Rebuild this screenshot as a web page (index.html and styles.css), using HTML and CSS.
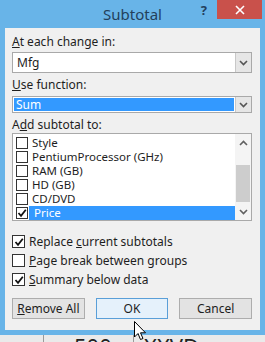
FILE: index.html
```html
<!DOCTYPE html>
<html lang="en">
<head>
    <meta charset="UTF-8">
    <title>Subtotal</title>
    <link rel="stylesheet" href="styles.css">
</head>
<body>
    <div class="window">
        <div class="titlebar">
            <span></span>
            <span class="title">Subtotal</span>
            <div class="title-buttons">
                <span class="help">?</span>
                <span class="close">
                    <svg width="10" height="10" viewBox="0 0 10 10"><path d="M1 1 L9 9 M9 1 L1 9" stroke="#fff" stroke-width="1.6"/></svg>
                </span>
            </div>
        </div>
        <div class="dialog">
            <div class="field-label label-first"><u>A</u>t each change in:</div>
            <div class="combo combo-tall">
                <span class="combo-value">Mfg</span>
                <span class="combo-arrow"><svg width="9" height="6" viewBox="0 0 9 6"><path d="M1 1 L4.5 4.5 L8 1" fill="none" stroke="#555" stroke-width="1.6"/></svg></span>
            </div>

            <div class="field-label"><u>U</u>se function:</div>
            <div class="combo combo-short">
                <span class="combo-value selected">Sum</span>
                <span class="combo-arrow"><svg width="9" height="6" viewBox="0 0 9 6"><path d="M1 1 L4.5 4.5 L8 1" fill="none" stroke="#555" stroke-width="1.6"/></svg></span>
            </div>

            <div class="field-label">A<u>d</u>d subtotal to:</div>
            <div class="list">
                <div class="list-items">
                    <div class="list-row"><span class="check"></span><span class="item-text">Style</span></div>
                    <div class="list-row"><span class="check"></span><span class="item-text">PentiumProcessor (GHz)</span></div>
                    <div class="list-row"><span class="check"></span><span class="item-text">RAM (GB)</span></div>
                    <div class="list-row"><span class="check"></span><span class="item-text">HD (GB)</span></div>
                    <div class="list-row"><span class="check"></span><span class="item-text">CD/DVD</span></div>
                    <div class="list-row"><span class="check checked"><svg width="10" height="10" viewBox="0 0 10 10"><path d="M1.5 5 L4 7.8 L8.8 1.8" fill="none" stroke="#111" stroke-width="1.8"/></svg></span><span class="item-text active">Price</span></div>
                </div>
                <div class="scrollbar">
                    <span class="scroll-btn"><svg width="9" height="6" viewBox="0 0 9 6"><path d="M1 5 L4.5 1.5 L8 5" fill="none" stroke="#606060" stroke-width="1.6"/></svg></span>
                    <div class="scroll-track"><div class="scroll-thumb"></div></div>
                    <span class="scroll-btn"><svg width="9" height="6" viewBox="0 0 9 6"><path d="M1 1 L4.5 4.5 L8 1" fill="none" stroke="#606060" stroke-width="1.6"/></svg></span>
                </div>
            </div>

            <div class="options">
                <div class="option"><span class="check checked"><svg width="10" height="10" viewBox="0 0 10 10"><path d="M1.5 5 L4 7.8 L8.8 1.8" fill="none" stroke="#111" stroke-width="1.8"/></svg></span><span>Replace <u>c</u>urrent subtotals</span></div>
                <div class="option"><span class="check"></span><span><u>P</u>age break between groups</span></div>
                <div class="option"><span class="check checked"><svg width="10" height="10" viewBox="0 0 10 10"><path d="M1.5 5 L4 7.8 L8.8 1.8" fill="none" stroke="#111" stroke-width="1.8"/></svg></span><span><u>S</u>ummary below data</span></div>
            </div>

            <div class="buttons">
                <button class="btn"><u>R</u>emove All</button>
                <button class="btn btn-default">OK</button>
                <button class="btn">Cancel</button>
            </div>
        </div>
    </div>
    <div class="sheet">
        <div class="cell cell-a"></div>
        <div class="cell cell-b">500</div>
        <div class="cell cell-c">XXVD</div>
    </div>

    <!-- mouse pointer over the OK button -->
    <svg class="cursor" width="13" height="20" viewBox="0 0 13 20">
        <path d="M0.5 0.5 L0.5 16 L4 12.5 L6.5 18.5 L9 17.5 L6.5 11.8 L11.5 11.8 Z" fill="#fff" stroke="#000" stroke-width="1"/>
    </svg>
</body>
</html>
```

FILE: styles.css
```css
body {
    margin: 0;
    width: 265px;
    height: 342px;
    overflow: hidden;
    background-color: #e9e9e9;
    font-family: 'Noto Sans', sans-serif;
    font-size: 12px;
    color: #1e1e1e;
    position: relative;
}
.window {
    background-color: #68b4e8;
    padding: 0 5px 5px 5px;
    height: 335px;
    box-sizing: border-box;
}
.titlebar {
    height: 28px;
    display: grid;
    grid-template-columns: 1fr auto 1fr;
    margin: 0 -5px;
}
.title {
    font-size: 15px;
    color: #23405c;
    line-height: 28px;
}
.title-buttons {
    display: flex;
    justify-content: flex-end;
    align-items: flex-start;
}
.help {
    font-weight: bold;
    font-size: 13px;
    color: #23405c;
    line-height: 20px;
    margin-right: 10px;
}
.close {
    width: 45px;
    height: 19px;
    background-color: #c9514b;
    margin-right: 3px;
    display: flex;
    justify-content: center;
    align-items: center;
}
.dialog {
    background-color: #f0f0f0;
    height: 302px;
    padding: 6px 8px 0 7px;
    box-sizing: border-box;
}
.field-label {
    line-height: 16px;
    margin-top: 4px;
}
.label-first {
    margin-top: 0;
}
.combo {
    display: flex;
    background-color: #fff;
    border: 1px solid #a9a9a9;
    margin-top: 2px;
    box-sizing: border-box;
}
.combo-tall {
    height: 21px;
}
.combo-short {
    height: 17px;
    margin-top: 3px;
}
.combo-value {
    flex: 1;
    padding-left: 4px;
    line-height: 19px;
}
.combo-short .combo-value {
    line-height: 13px;
    margin: 1px;
    padding-left: 2px;
}
.selected {
    background-color: #3399ff;
    color: #fff;
}
.combo-arrow {
    width: 15px;
    background-color: #e6e6e6;
    border-left: 1px solid #c8c8c8;
    display: flex;
    justify-content: center;
    align-items: center;
}
.list {
    display: flex;
    height: 88px;
    border: 1px solid #a9a9a9;
    background-color: #fff;
    box-sizing: border-box;
}
.list-items {
    flex: 1;
    padding: 2px 0 0 3px;
}
.list-row {
    display: flex;
    align-items: center;
    height: 14px;
}
.check {
    width: 12px;
    height: 12px;
    border: 1px solid #333;
    background-color: #fff;
    box-sizing: border-box;
    display: flex;
    justify-content: center;
    align-items: center;
    flex: none;
}
.item-text {
    flex: 1;
    font-size: 11.5px;
    line-height: 14px;
    padding-left: 3px;
    margin-left: 1px;
}
.active {
    background-color: #3399ff;
    color: #fff;
    padding-left: 5px;
}
.scrollbar {
    width: 16px;
    display: flex;
    flex-direction: column;
    background-color: #f4f4f4;
}
.scroll-btn {
    height: 17px;
    display: flex;
    justify-content: center;
    align-items: center;
}
.scroll-track {
    flex: 1;
    padding-top: 14px;
}
.scroll-thumb {
    height: 37px;
    background-color: #cdcdcd;
    margin: 0 1px;
}
.options {
    padding-top: 14px;
}
.option {
    display: flex;
    align-items: center;
    height: 13px;
    margin-bottom: 6px;
}
.option .check {
    width: 13px;
    height: 13px;
    margin-right: 4px;
}
.buttons {
    display: flex;
    gap: 11px;
    padding-top: 6px;
}
.btn {
    width: 73px;
    height: 21px;
    font-family: 'Noto Sans', sans-serif;
    font-size: 12px;
    color: #1e1e1e;
    background-color: #e3e3e3;
    border: 1px solid #adadad;
    padding: 0;
}
.btn-default {
    background-color: #e5f1fb;
    border: 1px solid #5a9fd8;
}
.sheet {
    display: flex;
    height: 7px;
    overflow: hidden;
    background-color: #eaeaea;
}
.cell {
    font-size: 22px;
    line-height: 22px;
    border-right: 1px solid #9a9a9a;
    color: #222;
}
.cell-a {
    width: 43px;
}
.cell-b {
    width: 90px;
    padding-left: 30px;
    box-sizing: border-box;
}
.cell-c {
    flex: 1;
    border-right: none;
    padding-left: 10px;
}
.cursor {
    position: absolute;
    left: 134px;
    top: 321px;
}
```
